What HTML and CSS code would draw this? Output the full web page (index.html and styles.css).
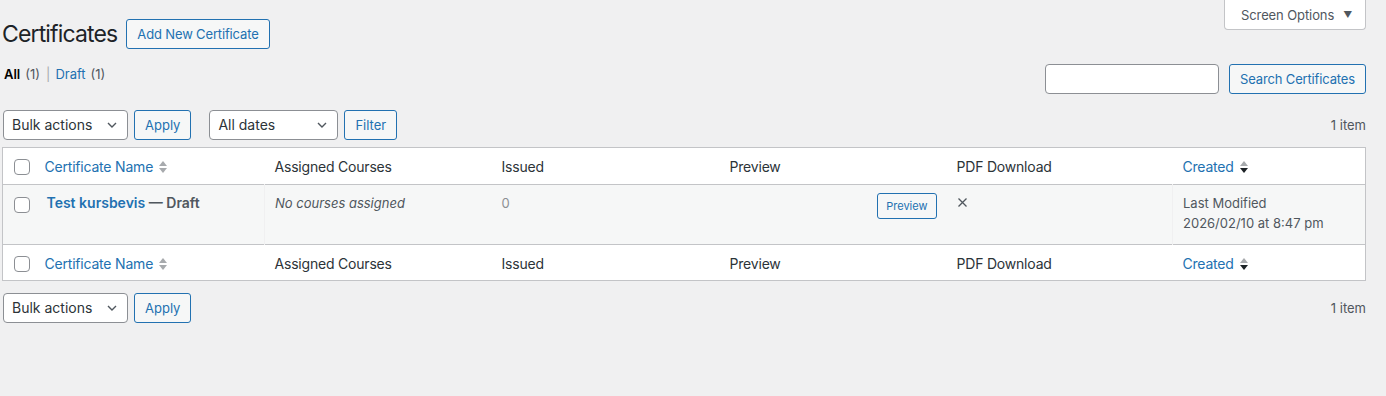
FILE: index.html
```html
<!DOCTYPE html>
<html lang="en">
<head>
<meta charset="utf-8">
<title>Certificates</title>
<link rel="stylesheet" href="styles.css">
</head>
<body>
<div class="screen-meta-links">
  <button class="show-settings">Screen Options <span class="caret">▼</span></button>
</div>
<div class="wrap">
  <div class="title-row">
    <h1 class="page-title">Certificates</h1>
    <a class="page-title-action" href="#">Add New Certificate</a>
  </div>
  <div class="filter-row">
    <ul class="subsubsub">
      <li><a class="current" href="#">All <span class="count">(1)</span></a> <span class="sep">|</span></li>
      <li><a href="#">Draft <span class="count">(1)</span></a></li>
    </ul>
    <div class="search-box">
      <input class="search-input" type="search">
      <button class="button">Search Certificates</button>
    </div>
  </div>
  <div class="tablenav top">
    <div class="actions">
      <div class="select w-bulk"><span>Bulk actions</span><svg class="chev" width="10" height="6" viewBox="0 0 10 6"><path d="M1 1l4 4 4-4" fill="none" stroke="#50575e" stroke-width="1.4"/></svg></div>
      <button class="button">Apply</button>
    </div>
    <div class="actions second">
      <div class="select w-dates"><span>All dates</span><svg class="chev" width="10" height="6" viewBox="0 0 10 6"><path d="M1 1l4 4 4-4" fill="none" stroke="#50575e" stroke-width="1.4"/></svg></div>
      <button class="button">Filter</button>
    </div>
    <div class="displaying-num">1 item</div>
  </div>
  <table class="widefat">
    <thead>
      <tr>
        <td class="check-column"><span class="cb"></span></td>
        <th class="c-name"><a href="#" class="sort-link">Certificate Name <span class="sorting"><i class="up"></i><i class="down"></i></span></a></th>
        <th class="c-courses">Assigned Courses</th>
        <th class="c-issued">Issued</th>
        <th class="c-preview">Preview</th>
        <th class="c-pdf">PDF Download</th>
        <th class="c-created"><a href="#" class="sort-link">Created <span class="sorting"><i class="up"></i><i class="down dark"></i></span></a></th>
      </tr>
    </thead>
    <tbody>
      <tr class="alt">
        <th class="check-column row-check"><span class="cb"></span></th>
        <td class="row-title-cell"><strong><a class="row-title" href="#">Test kursbevis</a> — <span class="post-state">Draft</span></strong></td>
        <td class="sep-left"><em>No courses assigned</em></td>
        <td class="muted">0</td>
        <td class="preview-cell"><button class="button small">Preview</button></td>
        <td class="x-cell"><svg width="9" height="9" viewBox="0 0 9 9"><path d="M0.5 0.5l8 8M8.5 0.5l-8 8" stroke="#50575e" stroke-width="1.3" fill="none"/></svg></td>
        <td class="date-cell sep-left">Last Modified<br>2026/02/10 at 8:47 pm</td>
      </tr>
    </tbody>
    <tfoot>
      <tr>
        <td class="check-column"><span class="cb"></span></td>
        <th><a href="#" class="sort-link">Certificate Name <span class="sorting"><i class="up"></i><i class="down"></i></span></a></th>
        <th>Assigned Courses</th>
        <th>Issued</th>
        <th>Preview</th>
        <th>PDF Download</th>
        <th><a href="#" class="sort-link">Created <span class="sorting"><i class="up"></i><i class="down dark"></i></span></a></th>
      </tr>
    </tfoot>
  </table>
  <div class="tablenav bottom">
    <div class="actions">
      <div class="select w-bulk"><span>Bulk actions</span><svg class="chev" width="10" height="6" viewBox="0 0 10 6"><path d="M1 1l4 4 4-4" fill="none" stroke="#50575e" stroke-width="1.4"/></svg></div>
      <button class="button">Apply</button>
    </div>
    <div class="displaying-num">1 item</div>
  </div>
</div>
</body>
</html>
```
FILE: styles.css
```css
* { box-sizing: border-box; }
html, body { margin: 0; padding: 0; }
body {
  background: #f0f0f1;
  color: #3c434a;
  font-family: Inter, "Liberation Sans", Arial, sans-serif;
  font-size: 13px;
  line-height: 1.4;
  width: 1386px;
  height: 396px;
  overflow: hidden;
}
a { color: #2271b1; text-decoration: none; }

.screen-meta-links {
  float: right;
  margin-right: 20px;
}
.show-settings {
  display: flex;
  align-items: center;
  gap: 9px;
  height: 30px;
  width: 142px;
  padding: 1px 0 0 16px;
  border: 1px solid #c3c4c7;
  border-top: none;
  border-radius: 0 0 4px 4px;
  background: #fff;
  color: #50575e;
  font: inherit;
  font-size: 13px;
  letter-spacing: -0.1px;
}
.caret { font-size: 9px; color: #50575e; }

.wrap { margin: 10px 20px 0 2px; }

.title-row {
  display: flex;
  align-items: center;
  padding-top: 9px;
  height: 40px;
}
.page-title {
  margin: -1px 0 0;
  font-size: 23px;
  font-weight: 400;
  color: #1d2327;
  line-height: 30px;
  letter-spacing: -0.85px;
}
.page-title-action {
  margin-left: 9px;
  margin-top: -1px;
  height: 30px;
  display: flex;
  align-items: center;
  padding: 0 10px;
  border: 1px solid #2271b1;
  border-radius: 3px;
  background: #f6f7f7;
  font-size: 13px;
  letter-spacing: -0.15px;
  color: #2271b1;
}

.filter-row {
  display: flex;
  justify-content: space-between;
  align-items: flex-start;
  margin-top: 14px;
}
.subsubsub {
  list-style: none;
  margin: 0 0 0 2px;
  padding: 0;
  display: flex;
  gap: 5px;
  font-size: 13px;
  line-height: 20px;
  color: #646970;
}
.subsubsub li { display: flex; gap: 5px; }
.subsubsub a { display: flex; gap: 5px; }
.subsubsub a .count { color: #50575e; }
.subsubsub a.current { color: #000; font-weight: 600; }
.subsubsub a.current .count { font-weight: 400; }
.sep { color: #a7aaad; margin-left: 1px; }

.search-box {
  display: flex;
  gap: 10px;
  margin-top: 0;
}
.search-input {
  width: 174px;
  height: 30px;
  border: 1px solid #8c8f94;
  border-radius: 4px;
  background: #fff;
  margin: 0;
}

.button {
  height: 30px;
  padding: 0 10px;
  border: 1px solid #2271b1;
  border-radius: 3px;
  background: #f6f7f7;
  color: #2271b1;
  font: inherit;
  font-size: 13px;
  line-height: 28px;
  cursor: pointer;
}
.search-box .button { letter-spacing: -0.15px; width: 137px; padding: 0; }
.button.small {
  height: 26px;
  padding: 0 8px;
  font-size: 11px;
  line-height: 24px;
}

.tablenav {
  display: flex;
  align-items: center;
  height: 30px;
}
.tablenav.top { margin: 16px 0 7px 1px; }
.tablenav.bottom { margin: 12px 0 0 1px; }
.actions { display: flex; gap: 6px; align-items: center; }
.actions.second { margin-left: 18px; }
.displaying-num {
  margin-left: auto;
  color: #50575e;
  font-size: 13px;
  margin-right: 0;
}

.select {
  height: 30px;
  display: flex;
  align-items: center;
  justify-content: space-between;
  padding: 0 10px 0 8px;
  border: 1px solid #8c8f94;
  border-radius: 4px;
  background: #fff;
  color: #2c3338;
  font-size: 14px;
}
.w-bulk { width: 125px; }
.w-dates { width: 129px; }

.widefat {
  width: 1364px;
  border-collapse: collapse;
  border: 1px solid #c3c4c7;
  background: #fff;
  table-layout: fixed;
  color: #2c3338;
}
.widefat th, .widefat td {
  text-align: left;
  font-weight: 400;
  font-size: 14px;
  letter-spacing: -0.2px;
  padding: 0 10px;
  vertical-align: middle;
}
.widefat thead tr { height: 37px; border-bottom: 1px solid #c3c4c7; }
.widefat thead th, .widefat thead td { padding-top: 1px; }
.widefat tfoot tr { height: 36px; border-top: 1px solid #c3c4c7; }
.widefat tfoot th, .widefat tfoot td { padding-top: 3px; }
.check-column { width: 32px; padding-left: 11px !important; padding-right: 0 !important; }
.c-name { width: 230px; }
.c-courses { width: 227px; }
.c-issued { width: 228px; }
.c-preview { width: 227px; }
.c-pdf { width: 226px; }

.cb {
  display: block;
  width: 16px;
  height: 16px;
  border: 1px solid #8c8f94;
  border-radius: 4px;
  background: #fff;
}

.sort-link { display: inline-flex; align-items: center; gap: 6px; }
.sorting { display: inline-flex; flex-direction: column; gap: 2px; }
.sorting i {
  display: block;
  width: 0; height: 0;
  border-left: 4px solid transparent;
  border-right: 4px solid transparent;
}
.sorting .up { border-bottom: 5px solid #a7aaad; }
.sorting .down { border-top: 5px solid #a7aaad; }
.sorting .down.dark { border-top-color: #1d2327; }

.widefat tbody tr.alt { background: #f6f7f7; height: 60px; }
.widefat tbody td, .widefat tbody th {
  vertical-align: top;
  padding-top: 8px;
  padding-bottom: 8px;
  font-size: 13px;
  letter-spacing: 0;
  line-height: 20px;
  color: #50575e;
}
.widefat tbody td.sep-left { border-left: 1px solid #f0f0f1; }
.widefat tbody .row-title-cell { padding-left: 12px; }
.widefat tbody .row-check { padding-top: 12px !important; }
.row-title-cell strong { font-size: 14px; font-weight: 600; color: #50575e; }
.row-title { color: #2271b1; }
.post-state { color: #50575e; }
.widefat tbody em { color: #50575e; }
.widefat tbody .muted { color: #8c8f94; }
.preview-cell { text-align: right !important; padding-top: 8px !important; }
.x-cell { padding-left: 11px !important; padding-top: 13px !important; line-height: 9px !important; }
.x-cell svg { display: block; }
.date-cell { color: #50575e; }
```
